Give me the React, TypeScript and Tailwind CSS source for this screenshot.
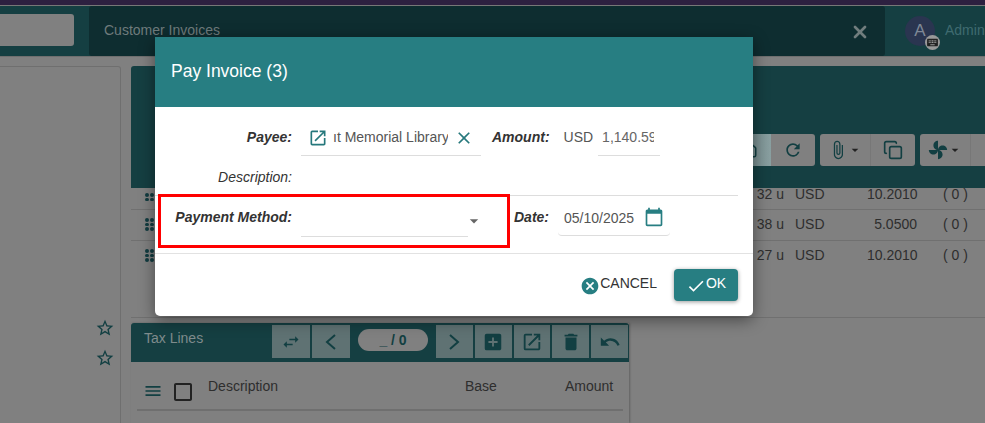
import { ReactNode } from 'react';
import { Copy, House, X } from 'lucide-react';
import {
  MdOpenInNew,
  MdClose,
  MdArrowDropDown,
  MdCalendarToday,
  MdCancel,
  MdCheck,
  MdRefresh,
  MdAttachFile,
  MdAddBox,
  MdDelete,
  MdUndo,
  MdMenu,
  MdStarBorder,
  MdCheckBoxOutlineBlank,
  MdSwapHoriz,
  MdKeyboard,
} from 'react-icons/md';

const rows = [
  { qty: '32 u', price: '10.2010', box: 'h-[22px] border-b', text: '-mt-[4px]', gripTop: 'mt-[5px]', gripRows: 2 },
  { qty: '38 u', price: '5.0500', box: 'h-[31px] border-b', text: 'mt-[4px]', gripTop: 'mt-[8px]', gripRows: 3 },
  { qty: '27 u', price: '10.2010', box: 'h-[31px]', text: 'mt-[4px]', gripTop: 'mt-[8px]', gripRows: 3 },
];

function FanIcon() {
  return (
    <svg viewBox="0 0 24 24" className="w-[20px] h-[20px] fill-current">
      <path d="M12 12c0-3 2.5-5.5 5.5-5.5S23 9 23 12H12zm0 0c0 3-2.5 5.5-5.5 5.5S1 15 1 12h11zm0 0c-3 0-5.5-2.5-5.5-5.5S9 1 12 1v11zm0 0c3 0 5.5 2.5 5.5 5.5S15 23 12 23V12z" />
    </svg>
  );
}

// thin chevrons of the pager, wider than the icon sets' ones
function Chevron({ points }: { points: string }) {
  return (
    <svg viewBox="0 0 12 16" className="w-[12px] h-[16px] fill-none stroke-current stroke-2">
      <polyline points={points} />
    </svg>
  );
}

function Grip({ rows }: { rows: number }) {
  return (
    <div className="grid grid-cols-2 gap-x-[1.5px] gap-y-[1px] w-[9px] shrink-0">
      {Array.from({ length: rows * 2 }).map((_, i) => (
        <span key={i} className="w-[3.5px] h-[3.5px] rounded-full bg-[#123c40]" />
      ))}
    </div>
  );
}

function TaxButton({ children }: { children: ReactNode }) {
  return (
    <div className="flex-1 h-[33px] flex items-center justify-center bg-[#5f7273] text-[#123f42] text-[22px]">
      {children}
    </div>
  );
}

function Label({ children, bold = true, className = '' }: { children: ReactNode; bold?: boolean; className?: string }) {
  return (
    <span className={`text-[14px] italic text-[#333] leading-[20px] whitespace-nowrap ${bold ? 'font-bold' : ''} ${className}`}>
      {children}
    </span>
  );
}

function PayDialog() {
  return (
    <div className="absolute left-[155px] top-[37px] w-[598px] h-[279px] bg-white rounded-b-[5px] shadow-[0_4px_16px_rgba(0,0,0,0.45)] flex flex-col">
      <div className="h-[70px] shrink-0 bg-[#277e82] flex items-center pl-4 pb-[2px] text-white text-[17.5px]">
        Pay Invoice (3)
      </div>

      <div className="h-[146px] shrink-0 relative flex flex-col">
        <div className="h-[49px] flex items-start pt-[20px]">
          <Label className="w-[137px] text-right">Payee:</Label>
          <div className="ml-[9px] w-[180px] h-[30px] border-b border-[#ddd] flex items-start pl-[7px] text-[#26787c] -mt-[1px]">
            <MdOpenInNew className="text-[20px] shrink-0 mt-[2px]" />
            <span className="ml-[5px] w-[115px] overflow-hidden whitespace-nowrap text-[14px] text-[#555] leading-[20px] pt-[1px]">
              ıt Memorial Library
            </span>
            <MdClose className="ml-[6px] text-[20px] shrink-0 mt-[2px]" />
          </div>
          <Label className="ml-[11px]">Amount:</Label>
          <span className="ml-[14px] text-[14px] text-[#555] leading-[20px]">USD</span>
          <div className="ml-[5px] w-[62px] h-[30px] -mt-[1px] pt-[1px] border-b border-[#ddd] text-[14px] text-[#666] leading-[20px] pl-[4px]">
            <span className="block w-[52px] overflow-hidden whitespace-nowrap">1,140.59</span>
          </div>
        </div>

        <div className="h-[40px] flex items-start pt-[11px] border-b border-[#ddd] mr-[15px]">
          <Label bold={false} className="w-[137px] text-right">Description:</Label>
        </div>

        <div className="flex-1 flex items-start">
          <Label className="w-[137px] text-right mt-[11px]">Payment Method:</Label>
          <div className="ml-[9px] w-[167px] h-[41px] border-b border-[#ddd]" />
          <MdArrowDropDown className="text-[20px] text-[#666] mt-[15px] -ml-[4px]" />
          <Label className="ml-[30px] mt-[11px]">Date:</Label>
          <div className="ml-[9px] w-[112px] h-[40px] border-b border-[#ddd] rounded-b-[4px] flex items-start pt-[12px] pl-[6px] text-[14px] text-[#555] leading-[20px] whitespace-nowrap">
            05/10/2025
            <MdCalendarToday className="ml-[10px] -mt-[1px] text-[20px] text-[#277e82]" />
          </div>
        </div>

        {/* highlight drawn over the screenshot */}
        <div className="absolute left-[3px] top-[87px] w-[352px] h-[54px] border-[3px] border-[#f00]" />
      </div>

      <div className="flex-1 border-t border-[#e2e2e2] flex items-start justify-end pr-[15px] pt-[15px]">
        <div className="flex items-center h-[32px] mr-[17px] text-[14px] text-[#333] -ml-[3px]">
          <MdCancel className="text-[20px] text-[#277e82] mt-[2px]" />
          <span className="-mt-[3px]">CANCEL</span>
        </div>
        <div className="w-[64px] h-[32px] rounded-[4px] bg-[#277e82] text-white text-[14px] flex items-center justify-center shadow-[0_1px_4px_rgba(0,0,0,0.4)]">
          <MdCheck className="text-[20px] mt-[2px]" />
          <span className="-mt-[3px]">OK</span>
        </div>
      </div>
    </div>
  );
}

export default function App() {
  return (
    <div className="relative w-[985px] h-[423px] overflow-hidden bg-[#808080] font-['Liberation_Sans',sans-serif] flex flex-col">
      <div className="h-[6px] shrink-0 bg-[#2d2040] border-b border-[#777]" />

      <div className="h-[51px] shrink-0 bg-[#153f42] flex border-b border-[#6f6f6f]">
        <div className="w-[74px] h-[32px] mt-[8px] bg-[#808080] rounded-r-[3px]" />
        <div className="ml-[15px] w-[796px] h-[50px] bg-[#0e2d30] rounded-[3px] flex items-start pl-[15px] pt-[14px] text-[14px] text-[#6e7b7c]">
          <span className="leading-[20px]">Customer Invoices</span>
          <X size={20} strokeWidth={3.2} className="ml-auto mr-[15px] mt-[2px] text-[#717d7e]" />
        </div>
        <div className="ml-[20px] relative w-[30px] h-[30px] mt-[10px] rounded-full bg-[#2a3550] flex items-center justify-center text-[#7f8896] text-[17px]">
          A
          <span className="absolute -right-[5px] -bottom-[4px] w-[15px] h-[15px] rounded-full bg-[#999] flex items-center justify-center text-[#222] text-[13px]">
            <MdKeyboard />
          </span>
        </div>
        <span className="ml-[10px] mt-[14px] text-[14px] leading-[20px] text-[#3f6b70] whitespace-nowrap">Admin</span>
      </div>

      <div className="flex-1 flex min-h-0 pt-[9px]">
        <div className="w-[121px] shrink-0 h-[400px] border border-l-0 border-[#6f6f6f] rounded-tr-[3px] flex flex-col items-end pt-[251px] pr-[5px] gap-[10px] text-[20px] text-[#123f42]">
          <MdStarBorder />
          <MdStarBorder />
        </div>

        <div className="ml-[10px] flex-1 min-w-0 flex flex-col">
          <div className="h-[252px] shrink-0 border-b border-[#707070] flex flex-col">
            <div className="h-[122px] shrink-0 bg-[#153f42] rounded-tl-[3px] flex items-start justify-end pt-[68px] text-[#123f42]">
              <div className="flex h-[32px] rounded-r-[3px] overflow-hidden">
                <div className="w-[44px] bg-[linear-gradient(90deg,#607577,#8aa0a1)] flex items-center justify-center">
                  <House size={18} strokeWidth={2} />
                </div>
                <div className="w-[44px] bg-[#808080] flex items-center justify-center text-[20px]">
                  <MdRefresh />
                </div>
              </div>
              <div className="ml-[5px] flex h-[32px] rounded-[3px] overflow-hidden bg-[#808080] w-[95px]">
                <div className="w-[51px] flex items-center justify-center text-[20px] border-r border-[#777]">
                  <MdAttachFile />
                  <MdArrowDropDown className="text-[16px] text-[#222] -ml-[1px]" />
                </div>
                <div className="flex-1 flex items-center justify-center">
                  <Copy size={20} strokeWidth={2} />
                </div>
              </div>
              <div className="ml-[5px] flex h-[32px] rounded-l-[3px] bg-[#808080] w-[65px] overflow-hidden">
                <div className="w-[51px] flex items-center justify-center border-r border-[#777]">
                  <FanIcon />
                  <MdArrowDropDown className="text-[16px] text-[#222] -ml-[1px]" />
                </div>
              </div>
            </div>
            {rows.map((row) => (
              <div key={row.qty} className={`${row.box} flex items-start border-[#707070] text-[14px] text-[#2e2e2e] leading-[20px] pl-[14px] pr-[18px] overflow-hidden whitespace-nowrap`}>
                <div className={row.gripTop}>
                  <Grip rows={row.gripRows} />
                </div>
                <span className={`ml-auto ${row.text}`}>{row.qty}</span>
                <span className={`ml-[11px] w-[30px] ${row.text}`}>USD</span>
                <span className={`ml-[42px] w-[50px] text-right ${row.text}`}>{row.price}</span>
                <span className={`ml-[26px] w-[24px] ${row.text}`}>( 0 )</span>
              </div>
            ))}
          </div>

          <div className="mt-[5px] w-[498px] flex-1 shadow-[1px_0_2px_rgba(0,0,0,0.25)] flex flex-col">
            <div className="h-[39px] shrink-0 bg-[#153f42] rounded-t-[3px] flex items-start pt-[2px] pr-[1px] text-[14px] text-[#7f8b8c]">
              <span className="ml-[13px] leading-[26px] w-[128px]">Tax Lines</span>
              <div className="flex gap-[2px] w-[78px]">
                <TaxButton><MdSwapHoriz className="text-[20px]" /></TaxButton>
                <TaxButton><Chevron points="10,1 2,8 10,15" /></TaxButton>
              </div>
              <div className="mx-[8px] mt-[4px] w-[70px] h-[22px] rounded-full bg-[#808080] flex items-center justify-center text-[#123f42] text-[14px] font-bold leading-none">
                _ / 0
              </div>
              <div className="flex gap-[2px] w-[192px]">
                <TaxButton><Chevron points="2,1 10,8 2,15" /></TaxButton>
                <TaxButton><MdAddBox /></TaxButton>
                <TaxButton><MdOpenInNew /></TaxButton>
                <TaxButton><MdDelete /></TaxButton>
                <TaxButton><MdUndo /></TaxButton>
              </div>
            </div>
            <div className="mx-[6px] h-[49px] border-b-2 border-[#6f6f6f] flex items-start pt-[14px] text-[14px] text-[#2e2e2e] leading-[20px]">
              <MdMenu className="mt-[5px] ml-[6px] text-[20px] text-[#123f42]" />
              <MdCheckBoxOutlineBlank className="mt-[4px] ml-[8px] text-[24px] text-[#222]" />
              <span className="ml-[13px] w-[257px]">Description</span>
              <span className="w-[100px]">Base</span>
              <span>Amount</span>
            </div>
          </div>
        </div>
      </div>

      <PayDialog />
    </div>
  );
}
